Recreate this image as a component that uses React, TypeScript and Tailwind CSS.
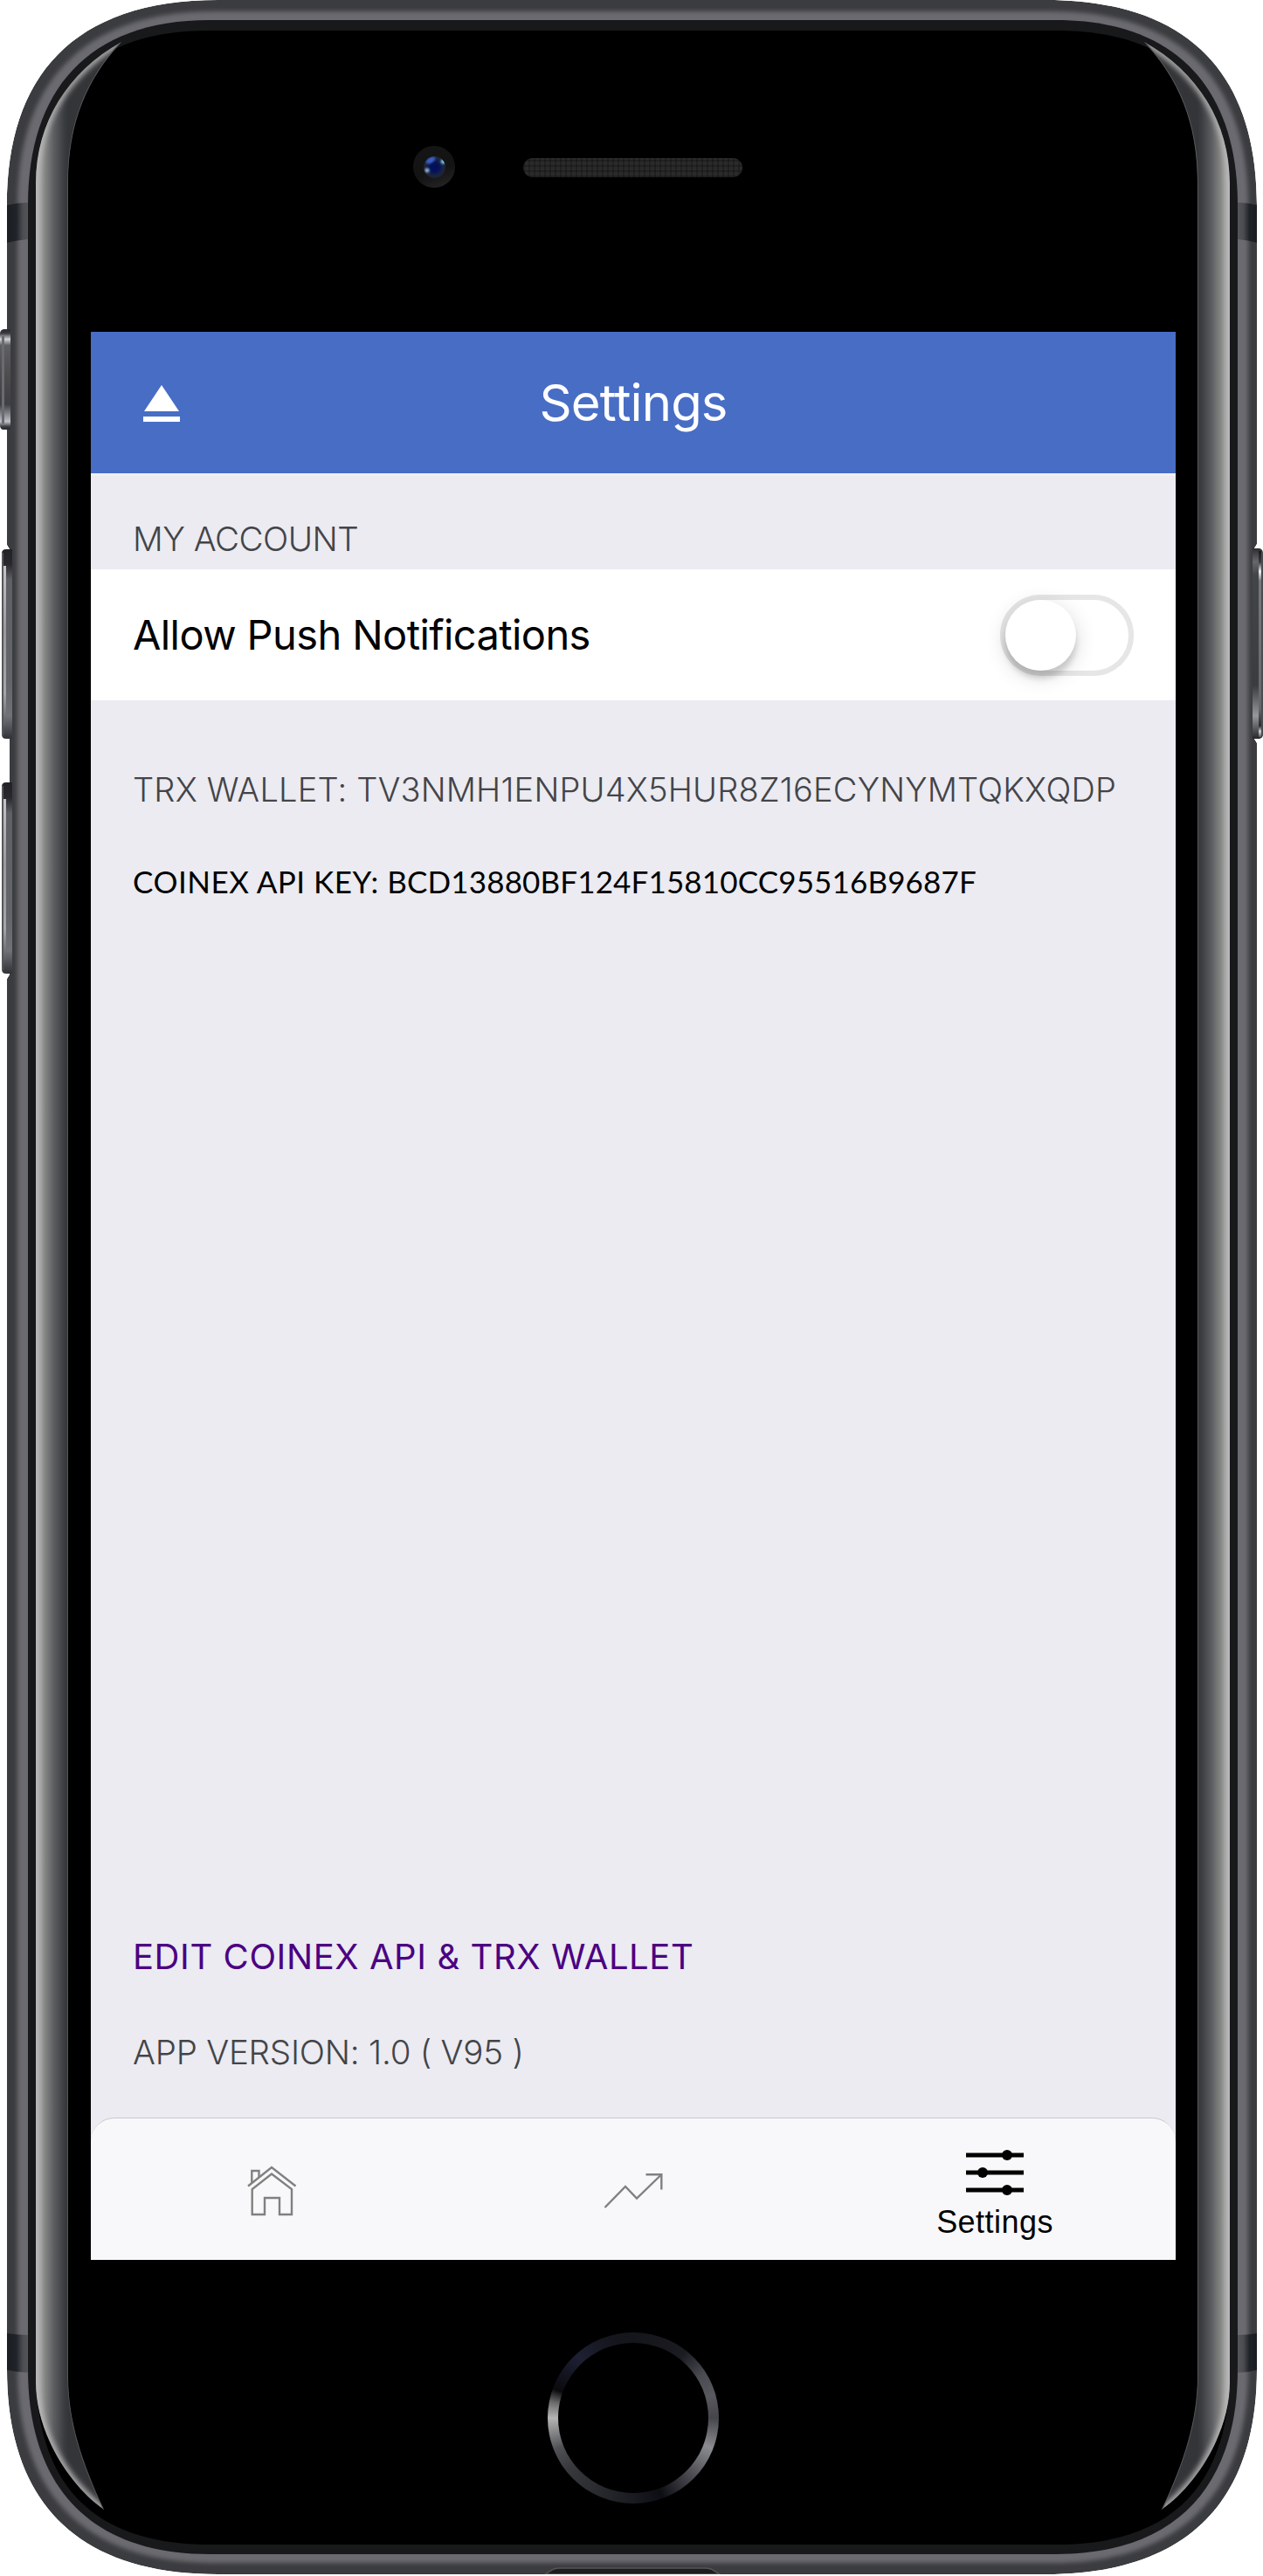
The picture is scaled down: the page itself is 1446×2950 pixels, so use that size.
import React from "react";

const BODY =
  "M8 235C8 88 83 0 250 0H1197C1364 0 1439 88 1439 235V623L1436 628V846L1439 851V2713C1439 2860 1364 2948 1197 2948H250C83 2948 8 2860 8 2713V1121L11 1116V629L8 624Z";
const RIM =
  "M20 235C20 98 92 13 245 13H1204C1357 13 1429 98 1429 235V2713C1429 2850 1357 2935 1204 2935H245C92 2935 20 2850 20 2713Z";
const INNER =
  "M32 235C32 104 100 23 240 23H1209C1349 23 1417 104 1417 235V2713C1417 2844 1349 2925 1209 2925H240C100 2925 32 2844 32 2713Z";
const GLASS =
  "M41 235C41 104 105 35 240 35H1209C1344 35 1408 104 1408 235V2713C1408 2844 1344 2914 1209 2914H240C105 2914 41 2844 41 2713Z";
const BEVEL =
  "M139 48C78 82 41 140 41 210V2728C41 2785 78 2845 119 2874C96 2825 78 2775 78 2722V210C78 140 100 90 139 48Z";
const BEVEL_EDGE = "M139 48C78 82 41 140 41 210V2728C41 2785 78 2845 119 2874";

function Bevel() {
  return (
    <g clipPath="url(#bevelClip)">
      <path d={BEVEL} fill="url(#bevelFill)" />
      <path d={BEVEL_EDGE} fill="none" stroke="#b9b9b9" strokeWidth="7" filter="url(#soft3)" />
      <path d="M119 2874C96 2825 78 2775 78 2722V210C78 140 100 90 139 48" fill="none" stroke="#55565a" strokeWidth="2" />
    </g>
  );
}

function VolumeKey({ y, h }: { y: number; h: number }) {
  return (
    <g>
      <path d={`M14 ${y}H7Q2 ${y} 2 ${y + 5}V${y + h - 5}Q2 ${y + h} 7 ${y + h}H14Z`} fill="url(#volFill)" />
      <rect x="2" y={y + 4} width="2" height={h - 8} fill="#55565a" />
      <rect x="4" y={y + 19} width="3" height={h - 34} fill="url(#volShine)" />
    </g>
  );
}

function DeviceFrame() {
  return (
    <svg className="absolute inset-0" width="1446" height="2950" viewBox="0 0 1446 2950" aria-hidden="true">
      <defs>
        <clipPath id="bodyClip"><path d={BODY} /></clipPath>
        <clipPath id="bevelClip"><path d={BEVEL} /></clipPath>
        <filter id="soft3" x="-20%" y="-5%" width="140%" height="110%"><feGaussianBlur stdDeviation="3" /></filter>
        <filter id="soft2" filterUnits="userSpaceOnUse" x="0" y="0" width="1446" height="2950"><feGaussianBlur stdDeviation="2.4" /></filter>
        <linearGradient id="bevelFill" gradientUnits="userSpaceOnUse" x1="41" y1="0" x2="78" y2="0">
          <stop offset="0" stopColor="#b4b4b4" />
          <stop offset="0.12" stopColor="#a2a3a2" />
          <stop offset="0.3" stopColor="#828482" />
          <stop offset="0.55" stopColor="#5e5f62" />
          <stop offset="0.88" stopColor="#3b3c40" />
          <stop offset="1" stopColor="#343538" />
        </linearGradient>
        <linearGradient id="bandL" gradientUnits="userSpaceOnUse" x1="8" y1="0" x2="32" y2="0">
          <stop offset="0" stopColor="#1a1e23" />
          <stop offset="0.45" stopColor="#20242a" />
          <stop offset="0.75" stopColor="#4b4c50" />
          <stop offset="1" stopColor="#55565a" />
        </linearGradient>
        <linearGradient id="bandR" gradientUnits="userSpaceOnUse" x1="1439" y1="0" x2="1417" y2="0">
          <stop offset="0" stopColor="#1a1e23" />
          <stop offset="0.4" stopColor="#20242a" />
          <stop offset="0.7" stopColor="#4b4c50" />
          <stop offset="1" stopColor="#55565a" />
        </linearGradient>
        <linearGradient id="muteFill" x1="0" y1="0" x2="0" y2="1">
          <stop offset="0" stopColor="#2a2b30" />
          <stop offset="0.04" stopColor="#3a3b40" />
          <stop offset="0.1" stopColor="#d2d2d6" />
          <stop offset="0.16" stopColor="#5e5f62" />
          <stop offset="0.45" stopColor="#4d4d4e" />
          <stop offset="0.75" stopColor="#3f4044" />
          <stop offset="0.92" stopColor="#c0c1c6" />
          <stop offset="0.97" stopColor="#3a3b40" />
          <stop offset="1" stopColor="#2a2b30" />
        </linearGradient>
        <linearGradient id="volFill" x1="0" y1="0" x2="0" y2="1">
          <stop offset="0" stopColor="#232327" />
          <stop offset="0.08" stopColor="#28282d" />
          <stop offset="0.16" stopColor="#5f6066" />
          <stop offset="0.7" stopColor="#64656a" />
          <stop offset="0.88" stopColor="#707277" />
          <stop offset="1" stopColor="#303237" />
        </linearGradient>
        <linearGradient id="volShine" x1="0" y1="0" x2="0" y2="1">
          <stop offset="0" stopColor="#c4c4c4" />
          <stop offset="0.4" stopColor="#9a9a9a" />
          <stop offset="0.8" stopColor="#a4a5a8" />
          <stop offset="1" stopColor="#5a5b60" />
        </linearGradient>
        <linearGradient id="powerFill" x1="0" y1="0" x2="0" y2="1">
          <stop offset="0" stopColor="#2c2d31" />
          <stop offset="0.07" stopColor="#66676b" />
          <stop offset="0.14" stopColor="#434649" />
          <stop offset="0.72" stopColor="#3b3c40" />
          <stop offset="0.88" stopColor="#97989c" />
          <stop offset="1" stopColor="#26272b" />
        </linearGradient>
        <linearGradient id="powerEdge" x1="0" y1="0" x2="0" y2="1">
          <stop offset="0" stopColor="#18191b" />
          <stop offset="0.06" stopColor="#3a3b3f" />
          <stop offset="0.11" stopColor="#f0f0f2" />
          <stop offset="0.16" stopColor="#77787c" />
          <stop offset="0.85" stopColor="#66676b" />
          <stop offset="0.94" stopColor="#2a2b2f" />
          <stop offset="0.97" stopColor="#d0d0d2" />
          <stop offset="1" stopColor="#55565a" />
        </linearGradient>
      </defs>

      <g clipPath="url(#bodyClip)">
        <path d={BODY} fill="#3b3c40" />
        <path d={RIM} fill="#6a6b6f" filter="url(#soft2)" />
        <path d="M8 235Q20 232 32 232V274Q20 275 8 278Z" fill="url(#bandL)" />
        <path d="M8 2672Q20 2674 32 2674V2717Q20 2717 8 2714Z" fill="url(#bandL)" />
        <path d="M1439 235Q1429 232 1417 232V274Q1429 275 1439 278Z" fill="url(#bandR)" />
        <path d="M1439 2672Q1429 2674 1417 2674V2717Q1429 2717 1439 2714Z" fill="url(#bandR)" />
        <path d="M624 2948L634 2942Q637 2941 641 2941H807Q811 2941 814 2942L824 2948Z" fill="#1d1e1e" stroke="#55565a" strokeWidth="1.4" />
      </g>
      <path d={INNER} fill="#18191b" />
      <path d={GLASS} fill="#000" />
      <Bevel />
      <g transform="translate(1449 0) scale(-1 1)"><Bevel /></g>

      <path d="M12 377H4Q0 378 0 382V487Q0 492 4 492H12Z" fill="url(#muteFill)" />
      <rect x="2" y="385" width="3" height="100" fill="#6a6b70" />
      <VolumeKey y={629} h={217} />
      <VolumeKey y={896} h={219} />
      <path d="M1434 628H1442Q1446 629 1446 634V841Q1446 845 1442 846H1434Z" fill="url(#powerFill)" />
      <rect x="1441" y="631" width="3" height="213" fill="url(#powerEdge)" />
      <rect x="1444" y="633" width="2" height="209" fill="#4c4d51" />
    </svg>
  );
}

function HomeIcon() {
  return (
    <svg width="58" height="60" viewBox="281 2479 58 60" fill="none" stroke="#808080" strokeWidth="2.4">
      <path d="M283 2503.5L310 2482L337.5 2503.5" />
      <path d="M287.7 2507V2536H302V2517H319V2536H333V2507L310 2489.5Z" />
      <path d="M287.3 2499.5V2486H295.5V2493" />
    </svg>
  );
}

function TrendIcon() {
  return (
    <svg width="70" height="44" viewBox="689 2488 70 44" fill="none" stroke="#808080" strokeWidth="2.4">
      <path d="M691.5 2529L715 2505L728 2518.5L756 2491.5" />
      <path d="M738.5 2491.2H756.3V2508.5" />
    </svg>
  );
}

function SlidersIcon() {
  return (
    <svg width="66" height="54" viewBox="1105 2461 66 54" stroke="#000" strokeWidth="5">
      <path d="M1105 2468H1171M1105 2488H1171M1105 2508H1171" />
      <g stroke="none">
        <circle cx="1152" cy="2468" r="6" />
        <circle cx="1124" cy="2488" r="6" />
        <circle cx="1152" cy="2508" r="6" />
      </g>
    </svg>
  );
}

function Camera() {
  return (
    <svg width="48" height="48" viewBox="0 0 48 48">
      <defs>
        <linearGradient id="camRing" x1="0.3" y1="0" x2="0.7" y2="1">
          <stop offset="0" stopColor="#151515" />
          <stop offset="0.6" stopColor="#131313" />
          <stop offset="1" stopColor="#242424" />
        </linearGradient>
        <radialGradient id="lens">
          <stop offset="0" stopColor="#020f5c" />
          <stop offset="0.4" stopColor="#04125a" />
          <stop offset="0.75" stopColor="#1a2340" />
          <stop offset="1" stopColor="#1f2433" />
        </radialGradient>
        <clipPath id="lensClip"><circle cx="24.5" cy="24.5" r="12.5" /></clipPath>
        <filter id="lensSoft" x="-50%" y="-50%" width="200%" height="200%"><feGaussianBlur stdDeviation="1.2" /></filter>
      </defs>
      <circle cx="24" cy="24" r="24" fill="url(#camRing)" />
      <circle cx="24.5" cy="24.5" r="12.5" fill="url(#lens)" />
      <g clipPath="url(#lensClip)">
        <g filter="url(#lensSoft)">
          <ellipse cx="20" cy="16.5" rx="6" ry="3.2" transform="rotate(-30 20 16.5)" fill="#3b5ec4" />
          <circle cx="34.5" cy="18" r="2.8" fill="#74c4ea" />
          <circle cx="16" cy="28" r="2.6" fill="#8fb0cf" />
        </g>
      </g>
    </svg>
  );
}

function Header() {
  return (
    <header className="flex h-[165px] shrink-0 items-center border-b-[3px] border-[#f0f0f2] bg-[#486dc5] px-[60px]">
      <div className="flex flex-1 pt-px">
        <svg width="42" height="42" viewBox="0 0 42 42" fill="#fff">
          <path d="M21 0L41 30H1Z" />
          <path d="M0 36H42V42H0Z" />
        </svg>
      </div>
      <h1 className="text-[58px] leading-[70px] tracking-[-0.85px] text-white">Settings</h1>
      <div className="flex-1" />
    </header>
  );
}

function Toggle() {
  return (
    <button
      role="switch"
      aria-checked="false"
      aria-label="Allow Push Notifications"
      className="flex h-[93px] w-[153px] items-center rounded-full border-[6px] border-[#e6e6e6] bg-white"
    >
      <span className="size-[81px] rounded-full bg-white shadow-[0_9px_6px_rgba(0,0,0,0.14),0_6px_24px_rgba(0,0,0,0.16)]" />
    </button>
  );
}

export default function App() {
  return (
    <div className="relative h-[2950px] w-[1446px] overflow-hidden bg-white font-['Inter',sans-serif]">
      <DeviceFrame />
      <div className="relative flex h-full flex-col pr-[100px] pl-[104px]">
        <div className="flex h-[380px] shrink-0 items-start pt-[167px] pl-[369px]">
          <Camera />
          <div className="mt-[14px] ml-[78px] h-[22px] w-[251px] rounded-full bg-[#2a2a2a] bg-[repeating-linear-gradient(90deg,rgba(0,0,0,0.22)_0_2px,transparent_2px_6px),repeating-linear-gradient(0deg,rgba(0,0,0,0.22)_0_2px,transparent_2px_6px)]" />
        </div>

        <main className="flex h-[2208px] shrink-0 flex-col bg-[#ebebf1] text-[#444448]">
          <Header />
          <h2 className="h-[107px] pt-[48px] pl-[48px] text-[38.5px] leading-[48px] font-light tracking-[-0.5px]">MY ACCOUNT</h2>
          <div className="flex h-[150px] shrink-0 items-center justify-between bg-white pr-[48px] pl-[48px] text-[47px] text-black">
            <span className="tracking-[-0.6px]">Allow Push Notifications</span>
            <Toggle />
          </div>
          <p className="mt-[78px] pl-[48px] text-[38px] leading-[48px] font-light tracking-[0.19px] whitespace-nowrap">
            TRX WALLET: TV3NMH1ENPU4X5HUR8Z16ECYNYMTQKXQDP
          </p>
          <p className="mt-[57px] pl-[48px] font-['Lato',sans-serif] text-[35px] leading-[48px] tracking-[0.14px] whitespace-nowrap text-black">
            <span className="tracking-[0.5px]">COINEX API KEY: </span>BCD13880BF124F15810CC95516B9687F
          </p>
          <div className="mt-auto pl-[48px]">
            <a className="block text-[40px] leading-[50px] tracking-[0.58px] text-[#4b0082]">EDIT COINEX API &amp; TRX WALLET</a>
            <p className="mt-[60px] mb-[51px] text-[38.5px] leading-[48px] font-light tracking-[-0.22px]">APP VERSION: 1.0 ( V95 )</p>
          </div>
          <nav className="grid h-[163px] shrink-0 grid-cols-3 rounded-t-[27px] border-t border-[#c8c8cc] bg-[#f8f8fa]">
            <a className="flex items-center justify-center pt-[4px]"><HomeIcon /></a>
            <a className="flex items-center justify-center pt-[4px]"><TrendIcon /></a>
            <a className="flex flex-col items-center pt-[35px] font-['Liberation_Sans',sans-serif] text-[36px] leading-[40px] text-black">
              <SlidersIcon />
              <span className="mt-[10px] tracking-[0.45px]">Settings</span>
            </a>
          </nav>
        </main>

        <div className="flex flex-1 justify-center pt-[83px]">
          <div className="size-[196px] rounded-full bg-[conic-gradient(#15161b,#1b1c22_38deg,#4a4b50_58deg,#58595e_74deg,#45464b_90deg,#8b8c90_111deg,#4a4b50_135deg,#0d0d14_160deg,#1a1b20_180deg,#38393d_232deg,#505155_248deg,#b5b5b5_270deg,#6b6b6b_281deg,#0a0a0e_290deg,#1e2033_318deg,#16171f_340deg,#15161b)] p-[12px]">
            <div className="size-full rounded-full bg-black" />
          </div>
        </div>
      </div>
    </div>
  );
}
